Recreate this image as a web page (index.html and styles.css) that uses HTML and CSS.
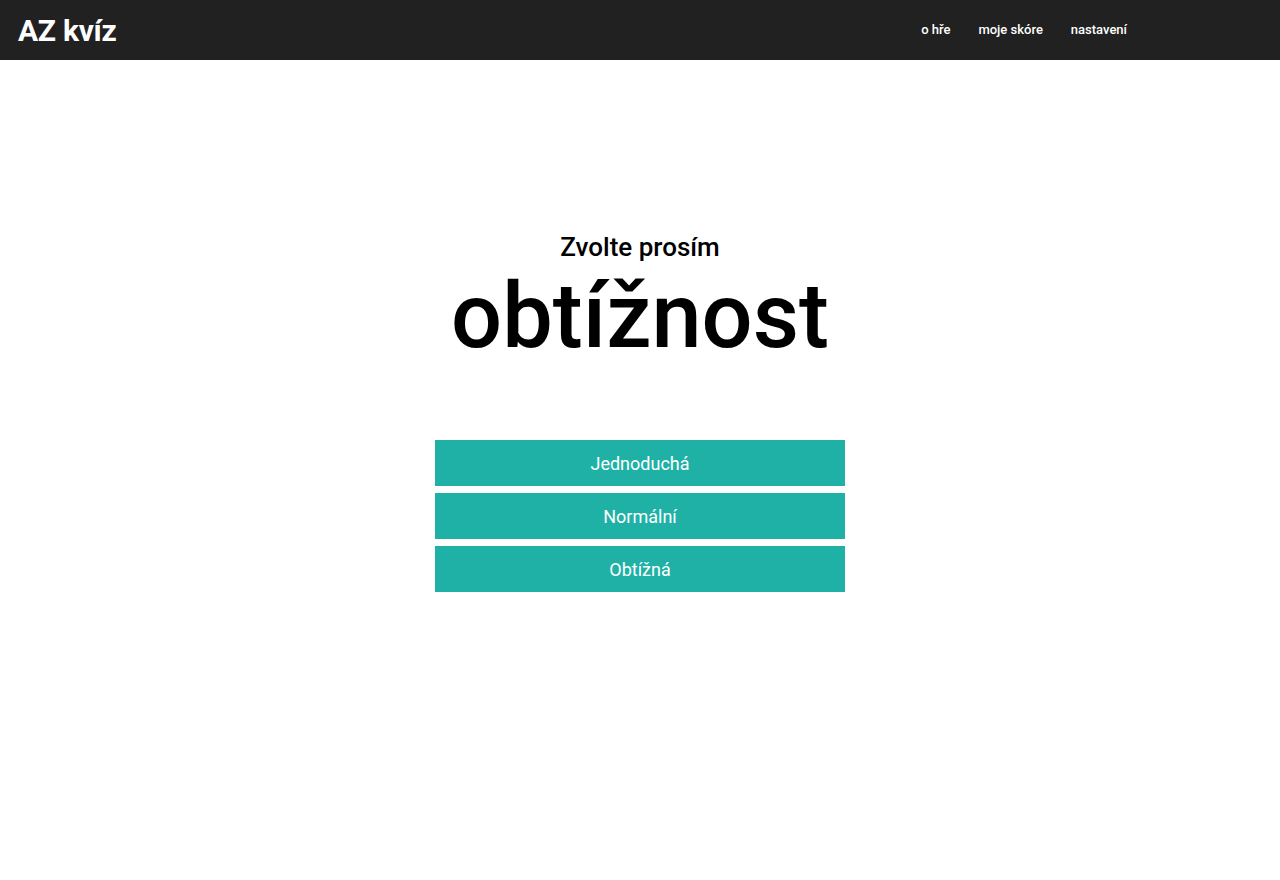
FILE: index.html
```html
<!DOCTYPE html>
<html lang="cs">
<head>
<meta charset="utf-8">
<title>AZ kvíz</title>
<link rel="stylesheet" href="styles.css">
</head>
<body>
<header class="topbar">
  <div class="logo">AZ kvíz</div>
  <nav class="nav">
    <a class="nav-link" href="#">o hře</a>
    <a class="nav-link" href="#">moje skóre</a>
    <a class="nav-link" href="#">nastavení</a>
  </nav>
</header>
<main class="main">
  <div class="heading">
    <div class="subtitle">Zvolte prosím</div>
    <h1 class="title">obtížnost</h1>
  </div>
  <div class="choices">
    <button class="choice">Jednoduchá</button>
    <button class="choice">Normální</button>
    <button class="choice">Obtížná</button>
  </div>
</main>
</body>
</html>
```

FILE: styles.css
```css
* { box-sizing: border-box; }
html, body { margin: 0; padding: 0; }
body {
  font-family: Roboto, "Noto Sans", sans-serif;
  background: #ffffff;
  color: #000;
}
.topbar {
  height: 60px;
  background: #212121;
  display: flex;
  align-items: center;
  justify-content: space-between;
  padding: 0 139px 0 18px;
}
.logo {
  color: #fff;
  font-size: 30px;
  font-weight: 700;
  letter-spacing: -0.3px;
}
.nav {
  display: flex;
  padding-bottom: 2px;
}
.nav-link {
  color: #fff;
  text-decoration: none;
  font-size: 13px;
  font-weight: 500;
  padding: 0 14px;
}
.main {
  display: flex;
  flex-direction: column;
  align-items: center;
  padding-top: 172px;
}
.heading { text-align: center; }
.subtitle {
  font-size: 26px;
  font-weight: 500;
  line-height: 30px;
}
.title {
  margin: 0;
  font-size: 90px;
  font-weight: 500;
  line-height: 110px;
}
.choices {
  margin-top: 68px;
  display: flex;
  flex-direction: column;
  gap: 7px;
  width: 410px;
}
.choice {
  height: 46px;
  border: none;
  background: #1fb1a6;
  color: #fff;
  font-family: Roboto, sans-serif;
  font-size: 18px;
  font-weight: 400;
  cursor: pointer;
}
```
